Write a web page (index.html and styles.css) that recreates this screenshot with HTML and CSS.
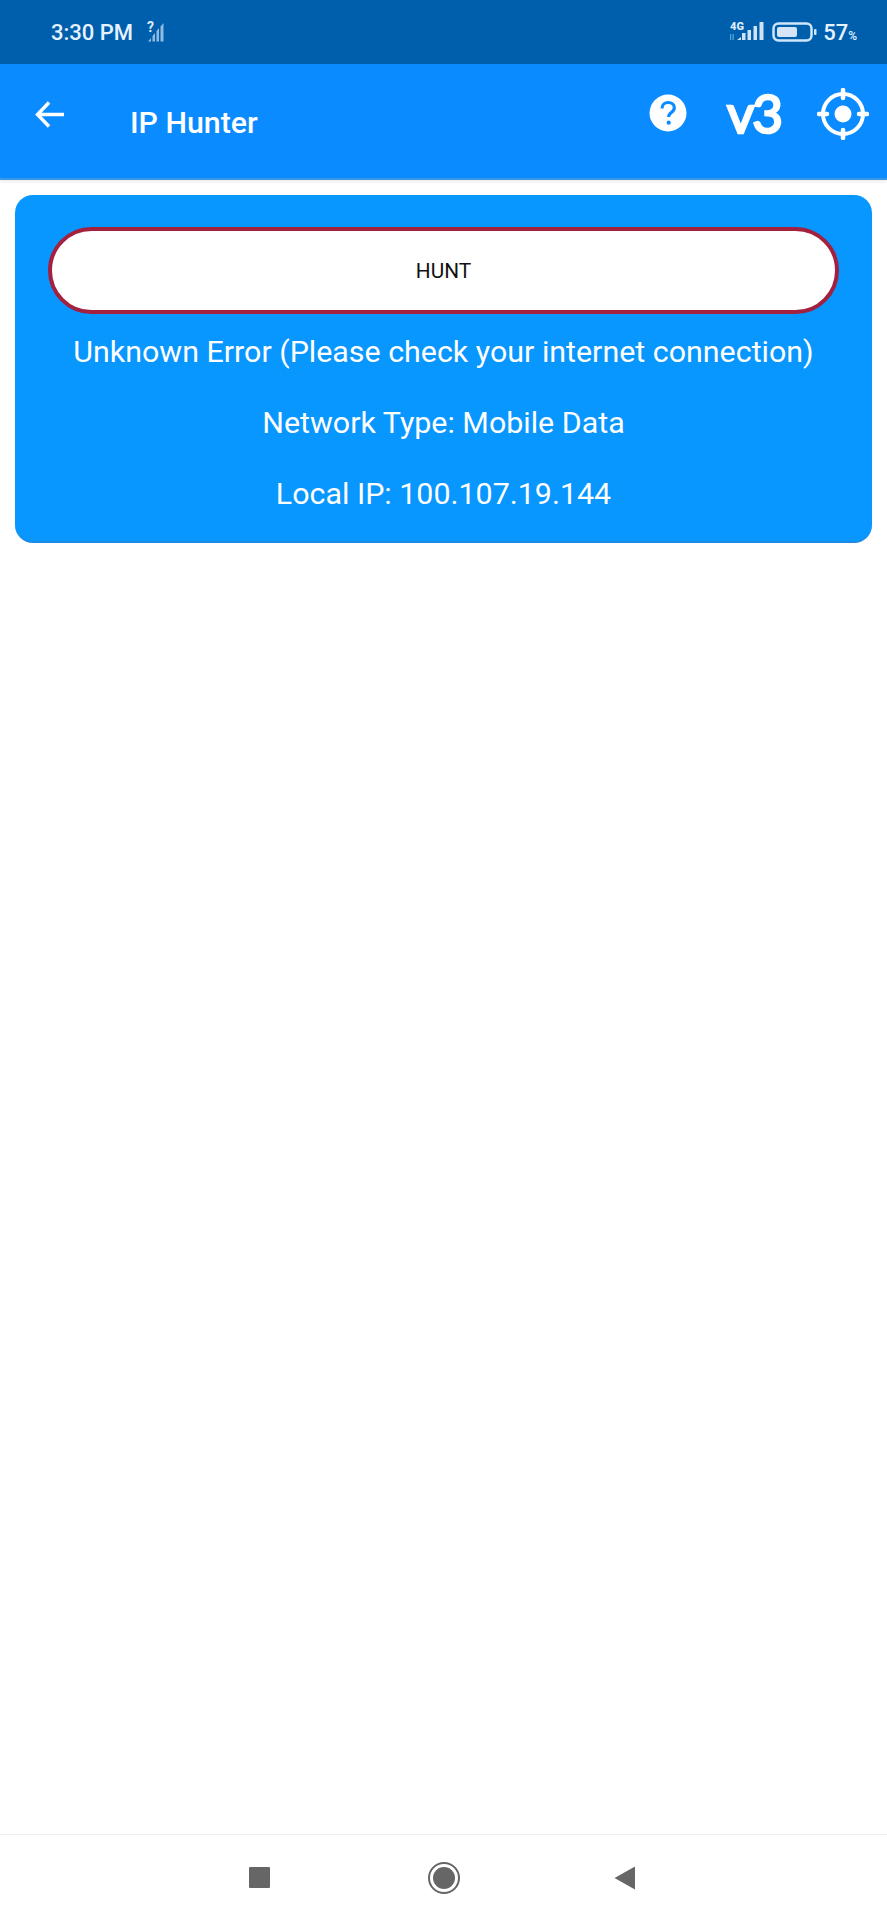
FILE: index.html
```html
<!DOCTYPE html>
<html lang="en">
<head>
<meta charset="utf-8">
<title>IP Hunter</title>
<link rel="stylesheet" href="styles.css">
</head>
<body>
<div class="screen">
  <header class="status">
    <div class="status-left">
      <span class="clock">3:30 PM</span>
      <svg class="nosim" width="22" height="30" viewBox="0 0 22 30">
        <text x="2" y="15" class="nosim-q">?</text>
        <path d="M3 24.500l3-3.500v3.500zM7.500 24.500v-5.500l2.500-3v8.500zM11.500 24.500V14l2.500-3v13.500zM15.500 24.500V9.500l3-3.500v18.500z" fill="#8fbbe0"/>
      </svg>
    </div>
    <div class="status-right">
      <svg class="signal" width="40" height="24" viewBox="0 0 40 24">
        <text x="1" y="10" class="net">4G</text>
        <path d="M1 14h1.200v6H1zM3.500 14h1.200v6H3.500z" fill="#5fa5dc"/>
        <path d="M8 20l4-3v3zM13 13h3.500v7H13zM18.500 10h3.500v10h-3.500zM24.500 6h3.500v14h-3.500zM30.500 2h4v18h-4z" fill="#cfe3f5"/>
      </svg>
      <svg class="battery" width="46" height="24" viewBox="0 0 46 24">
        <rect x="1.500" y="3.500" width="38" height="17" rx="5" fill="none" stroke="#cfe6fa" stroke-width="2.500"/>
        <rect x="5" y="7" width="20" height="10" rx="2" fill="#d5e4f6"/>
        <rect x="42" y="9" width="2.500" height="6" rx="1" fill="#cfe6fa"/>
      </svg>
      <span class="pct">57<small>%</small></span>
    </div>
  </header>

  <nav class="appbar">
    <div class="appbar-left">
      <svg class="back" width="32" height="32" viewBox="0 0 32 32">
        <path d="M30 15.500H4M15 3.500L3.500 15.500 15 27.500" fill="none" stroke="#fff" stroke-width="3.400"/>
      </svg>
      <span class="title">IP Hunter</span>
    </div>
    <div class="appbar-right">
      <svg class="help" width="38" height="38" viewBox="0 0 38 38">
        <circle cx="19" cy="19" r="18.500" fill="#fff"/>
        <path d="M13 14.500c0-3.700 2.700-6 6.200-6 3.600 0 6.100 2.200 6.100 5.200 0 2.300-1.200 3.500-3 4.800-1.900 1.300-2.600 2.200-2.600 4.500" fill="none" stroke="#0a8bff" stroke-width="3.200"/>
        <circle cx="19.700" cy="28.700" r="2.100" fill="#0a8bff"/>
      </svg>
      <span class="version">v3</span>
      <svg class="target" width="52" height="52" viewBox="0 0 52 52">
        <circle cx="26" cy="26" r="20" fill="none" stroke="#fff" stroke-width="4"/>
        <circle cx="26" cy="26" r="8.500" fill="#fff"/>
        <path d="M26 2v8M26 42v8M2 26h8M42 26h8" stroke="#fff" stroke-width="4.500" stroke-linecap="round"/>
      </svg>
    </div>
  </nav>

  <main class="content">
    <section class="card">
      <button class="hunt" type="button">HUNT</button>
      <p class="line line-first">Unknown Error (Please check your internet connection)</p>
      <p class="line">Network Type: Mobile Data</p>
      <p class="line">Local IP: 100.107.19.144</p>
    </section>
  </main>

  <footer class="navbar">
    <span class="nav-square"></span>
    <span class="nav-home"><span class="nav-home-dot"></span></span>
    <svg class="nav-back" width="22" height="24" viewBox="0 0 22 24">
      <path d="M0.500 12L21 0.500v23z" fill="#666"/>
    </svg>
  </footer>
</div>
</body>
</html>
```

FILE: styles.css
```css
* {
  box-sizing: border-box;
}

html,
body {
  margin: 0;
  padding: 0;
  background: #fff;
}

body {
  font-family: Roboto, "Liberation Sans", sans-serif;
}

.screen {
  display: flex;
  flex-direction: column;
  height: 1920px;
  overflow: hidden;
}

.status {
  flex: none;
  height: 64px;
  background: #005fad;
  color: #e6f3ff;
  display: flex;
  align-items: center;
  justify-content: space-between;
  padding: 0 30px 0 51px;
}

.status-left,
.status-right {
  display: flex;
  align-items: center;
}

.clock {
  font-size: 22px;
  font-weight: 500;
}

.nosim {
  margin-left: 12px;
}

.nosim-q {
  font-family: Roboto, sans-serif;
  font-size: 14px;
  font-weight: 700;
  fill: #dcecfa;
}

.net {
  font-family: Roboto, sans-serif;
  font-size: 11px;
  font-weight: 900;
  fill: #dcecfa;
}

.battery {
  margin-left: 3px;
}

.pct {
  margin-left: 5px;
  font-size: 22px;
  font-weight: 500;
}

.pct small {
  font-size: 12px;
}

.appbar {
  flex: none;
  height: 116px;
  background: #0a8bff;
  border-bottom: 2px solid #3a97e6;
  box-shadow: 0 2px 3px rgba(0, 0, 0, 0.08);
  display: flex;
  align-items: center;
  justify-content: space-between;
  padding: 0 18px 0 34px;
  color: #fff;
}

.appbar-left,
.appbar-right {
  display: flex;
  align-items: center;
}

.back {
  margin-bottom: 12px;
}

.title {
  margin-left: 64px;
  font-size: 30.300px;
  font-weight: 500;
  margin-top: 2px;
}

.help {
  margin-bottom: 16px;
}

.version {
  margin-left: 40px;
  font-family: Lato, "Open Sans", sans-serif;
  font-size: 53px;
  font-weight: 400;
  letter-spacing: -2px;
  line-height: 1;
  margin-bottom: 18px;
  -webkit-text-stroke: 2.500px #fff;
}

.target {
  margin-left: 36px;
  margin-bottom: 14px;
}

.content {
  flex: 1;
  padding: 15px 15px 0;
}

.card {
  height: 348px;
  background: #0896ff;
  border-bottom: 2px solid #1b8be6;
  border-radius: 18px;
  padding: 32px 33px 0;
  text-align: center;
  color: #fff;
}

.hunt {
  display: block;
  width: 100%;
  height: 87px;
  background: #fff;
  border: 4px solid #a3213f;
  border-radius: 44px;
  color: #111;
  font-family: Roboto, sans-serif;
  font-size: 20.800px;
  font-weight: 400;
}

.line {
  margin: 0;
  height: 71px;
  line-height: 71px;
  font-size: 30.400px;
  white-space: nowrap;
}

.line-first {
  margin-top: 2px;
}

.navbar {
  flex: none;
  height: 86px;
  border-top: 1px solid #eee;
  background: #fff;
  display: flex;
  align-items: center;
  padding-left: 249px;
}

.nav-square {
  width: 21px;
  height: 21px;
  background: #666;
  border-radius: 1px;
}

.nav-home {
  margin-left: 158px;
  width: 32px;
  height: 32px;
  border: 2px solid #666;
  border-radius: 50%;
  display: flex;
  align-items: center;
  justify-content: center;
}

.nav-home-dot {
  width: 22px;
  height: 22px;
  background: #666;
  border-radius: 50%;
}

.nav-back {
  margin-left: 154px;
}
```
